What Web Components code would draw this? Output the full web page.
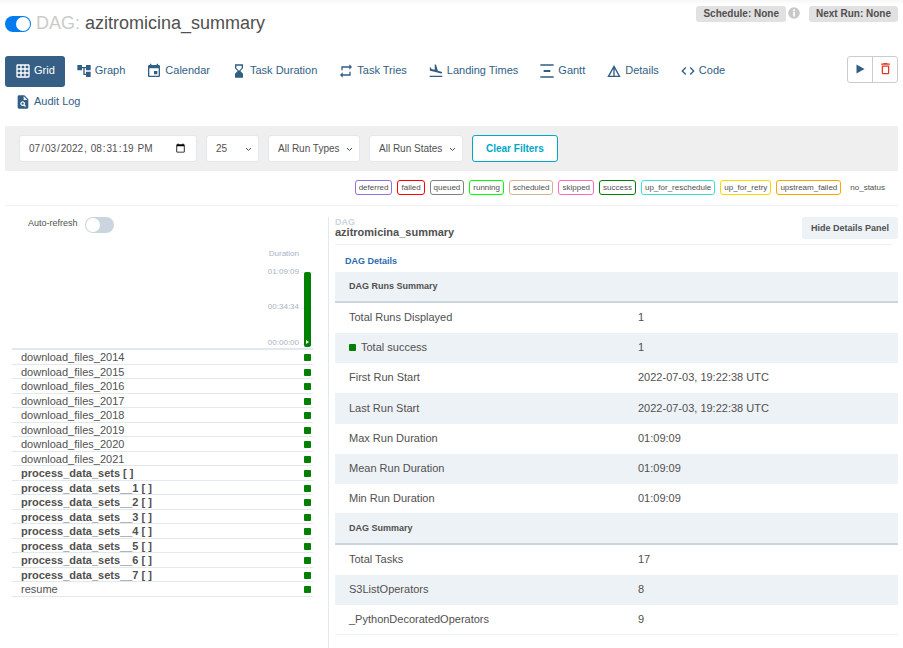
<!DOCTYPE html>
<html lang="en-US">
<head>
<meta charset="utf-8">
<title>azitromicina_summary - Grid - Airflow</title>
<style>
  body { margin: 0; background: #fff; color: #51504f; font: 11px/15px "Liberation Sans", Arial, sans-serif; }
</style>
</head>
<body>
<dag-page></dag-page>
<script>
const define = (name, html, setup) => {
  const template = document.createElement('template');
  template.innerHTML = html;
  customElements.define(name, class extends HTMLElement {
    connectedCallback() {
      if (this.shadowRoot) return;
      const root = this.attachShadow({ mode: 'open' });
      root.append(template.content.cloneNode(true));
      if (setup) setup(this, root);
    }
  });
};

const ICONS = {
  grid: 'M20 2H4c-1.1 0-2 .9-2 2v16c0 1.1.9 2 2 2h16c1.1 0 2-.9 2-2V4c0-1.1-.9-2-2-2zM8 20H4v-4h4v4zm0-6H4v-4h4v4zm0-6H4V4h4v4zm6 12h-4v-4h4v4zm0-6h-4v-4h4v4zm0-6h-4V4h4v4zm6 12h-4v-4h4v4zm0-6h-4v-4h4v4zm0-6h-4V4h4v4z',
  tree: 'M22 11V3h-7v3H9V3H2v8h7V8h2v10h4v3h7v-8h-7v3h-2V8h2v3z',
  event: 'M17 12h-5v5h5v-5zM16 1v2H8V1H6v2H5c-1.11 0-1.99.9-1.99 2L3 19c0 1.1.89 2 2 2h14c1.1 0 2-.9 2-2V5c0-1.1-.9-2-2-2h-1V1h-2zm3 18H5V8h14v11z',
  hourglass: 'M18 22l-.01-6L14 12l3.99-4.01L18 2H6v6l4 4-4 3.99V22h12zM8 7.5V4h8v3.5l-4 4-4-4z',
  repeat: 'M7 7h10v3l4-4-4-4v3H5v6h2V7zm10 10H7v-3l-4 4 4 4v-3h12v-6h-2v4z',
  landing: 'M2.5 19h19v2h-19v-2zm7.18-5.73l4.35 1.16 5.31 1.42c.8.21 1.62-.26 1.84-1.06.21-.8-.26-1.62-1.06-1.84l-5.31-1.42-2.76-9.02L10.12 2v8.28L5.15 8.95l-.93-2.32-1.45-.39v5.17l1.6.43 5.31 1.43z',
  gantt: 'M22 2v2H2V2h20zM7 10.5v3h10v-3H7zM2 20v2h20v-2H2z',
  details: 'M12 3L2 21h20L12 3zm1 5.92L18.6 19H13V8.92zm-2 0V19H5.4L11 8.92z',
  code: 'M9.4 16.6L4.8 12l4.6-4.6L8 6l-6 6 6 6 1.4-1.4zm5.2 0l4.6-4.6-4.6-4.6L16 6l6 6-6 6-1.4-1.4z',
  audit: 'M14 2H6c-1.1 0-2 .9-2 2v16c0 1.1.9 2 2 2h12c1.1 0 2-.9 2-2V8l-6-6zM13 3.500V9h5.500zM15.040 19.450l-1.880-1.880c-1.330.71-3.010.53-4.130-.59-1.370-1.370-1.370-3.580 0-4.950s3.580-1.370 4.950 0c1.120 1.120 1.310 2.800.59 4.130l1.880 1.880zM11.500 12.800a1.700 1.700 0 1 0 0 3.400 1.700 1.700 0 0 0 0-3.400z',
  play: 'M5 3v18l16-9z',
  trash: 'M6 19c0 1.100.9 2 2 2h8c1.100 0 2-.9 2-2V7H6v12zM8 9h8v10H8V9zm7.500-5l-1-1h-5l-1 1H5v2h14V4z',
  info: 'M12 2a10 10 0 1 0 0 20 10 10 0 0 0 0-20zm1.500 16h-3v-8h3zm0-9.500h-3v-3h3z'
};

define('ui-icon', `
  <style>
    :host { display: block; width: 16px; height: 16px; flex: none; }
    svg { display: block; width: 100%; height: 100%; fill: currentColor; fill-rule: evenodd; }
  </style>
  <svg viewBox="0 0 24 24" aria-hidden="true"><path/></svg>`,
  (el, root) => root.querySelector('path').setAttribute('d', ICONS[el.getAttribute('name')]));

define('ui-switch', `
  <style>
    :host { display: block; }
    label { display: flex; align-items: flex-start; gap: 7px; font-size: 9px; line-height: 12px; }
    input { appearance: none; box-sizing: border-box; flex: none; width: var(--switch-width, 29px); height: 16px; margin: 0; padding: 1px; border-radius: 8px; background: #cbd5e0; display: flex; cursor: pointer; }
    input::before { content: ""; width: 14px; height: 14px; border-radius: 7px; background: #fff; }
    input:checked { background: #017cee; justify-content: flex-end; }
  </style>
  <label><slot></slot><input type="checkbox" role="switch"></label>`,
  (el, root) => {
    const box = root.querySelector('input');
    box.checked = el.hasAttribute('checked');
    if (el.hasAttribute('name')) box.setAttribute('aria-label', el.getAttribute('name'));
  });

define('info-badge', `
  <style>
    :host { display: block; padding: 0 7px; border-radius: 3px; background: #e1e1e1; font-weight: bold; font-size: 10px; line-height: 16px; }
  </style><slot></slot>`);

define('nav-tab', `
  <style>
    :host { display: block; }
    a { display: flex; align-items: center; gap: 3px; box-sizing: border-box; height: 31px; padding: 0 10px 2px; border-radius: 3px; color: #315e85; text-decoration: none; white-space: nowrap; }
    a[aria-current] { background: #355f84; color: #fff; }
  </style>
  <a href="#"><slot name="icon"></slot><span><slot></slot></span></a>`,
  (el, root) => {
    const icon = document.createElement('template');
    icon.innerHTML = `<ui-icon name="${el.getAttribute('icon')}"></ui-icon>`;
    root.querySelector('slot[name]').replaceWith(icon.content);
    if (el.hasAttribute('active')) root.querySelector('a').setAttribute('aria-current', 'page');
  });

define('state-tag', `
  <style>
    :host { display: block; }
    button { display: block; margin: 0; padding: 0 3px; border: 1px solid var(--state, transparent); border-radius: 3px; background: #fff; color: inherit; font: inherit; font-size: 8px; line-height: 13px; }
  </style><button type="button"><slot></slot></button>`,
  (el, root) => el.hasAttribute('color') && root.querySelector('button').style.setProperty('--state', el.getAttribute('color')));

define('dag-header', `
  <style>
    :host { display: flex; justify-content: space-between; align-items: flex-start; height: 50px; padding: 6px 5px 0; box-sizing: border-box; background: linear-gradient(#f7f7f7, #fff 5px); }
    .title { display: flex; align-items: center; gap: 5px; padding-top: 7px; }
    h1 { margin: 0; padding-bottom: 2px; font-size: 18px; line-height: 20px; font-weight: normal; }
    h1 span { color: #cbcbcb; }
    .meta { display: flex; align-items: flex-start; }
    .meta ui-icon { width: 14px; height: 14px; margin: 0 8px 0 1px; color: #c8c8c8; }
  </style>
  <div class="title">
    <ui-switch checked name="Pause or unpause DAG" style="--switch-width: 26px"></ui-switch>
    <h1><span>DAG:</span> azitromicina_summary</h1>
  </div>
  <div class="meta"><info-badge>Schedule: None</info-badge><ui-icon name="info"></ui-icon><info-badge>Next Run: None</info-badge></div>`);

define('dag-nav', `
  <style>
    :host { display: flex; align-items: flex-start; justify-content: space-between; gap: 32px; padding: 6px 5px 8px; }
    nav { display: flex; flex-wrap: wrap; column-gap: 1px; }
    .actions { display: flex; flex: none; border: 1px solid #ccc; border-radius: 3px; }
    button { display: grid; place-items: center; box-sizing: border-box; width: 24px; height: 25px; margin: 0; padding: 0 0 2px; border: 0; background: none; color: #315e85; }
    button ui-icon { width: 12px; height: 12px; }
    button + button { width: 25px; border-left: 1px solid #ccc; color: #e43921; }
    button + button ui-icon { width: 15px; height: 15px; }
  </style>
  <nav>
    <nav-tab icon="grid" active>Grid</nav-tab><nav-tab icon="tree">Graph</nav-tab><nav-tab icon="event">Calendar</nav-tab><nav-tab icon="hourglass">Task Duration</nav-tab><nav-tab icon="repeat">Task Tries</nav-tab><nav-tab icon="landing">Landing Times</nav-tab><nav-tab icon="gantt">Gantt</nav-tab><nav-tab icon="details">Details</nav-tab><nav-tab icon="code">Code</nav-tab><nav-tab icon="audit">Audit Log</nav-tab>
  </nav>
  <div class="actions">
    <button type="button" aria-label="Trigger DAG"><ui-icon name="play"></ui-icon></button>
    <button type="button" aria-label="Delete DAG"><ui-icon name="trash"></ui-icon></button>
  </div>`);

define('filter-select', `
  <style>
    :host { display: grid; width: var(--w); }
    select, svg { grid-area: 1 / 1; }
    select { appearance: none; box-sizing: border-box; width: 100%; height: 27px; margin: 0; padding: 0 0 0 9px; border: 1px solid #e2e8f0; border-radius: 3px; background: #fff; color: inherit; font: inherit; font-size: 10px; }
    svg { justify-self: end; align-self: center; width: 7px; height: 5px; margin: 2px 7px 0 0; fill: none; stroke: #51504f; pointer-events: none; }
  </style>
  <select><option></option></select><svg viewBox="0 0 7 5"><path d="M1 1l2.500 2.500L6 1"/></svg>`,
  (el, root) => {
    root.querySelector('option').textContent = el.getAttribute('value');
    root.querySelector('select').setAttribute('aria-label', el.getAttribute('label'));
  });

define('filter-bar', `
  <style>
    :host { display: flex; flex-wrap: wrap; gap: 9px; margin: 0 5px; padding: 9px 14px; background: #efefef; }
    input { box-sizing: border-box; width: 178px; height: 27px; margin: 0; padding: 0 10px 0 8px; border: 1px solid #e2e8f0; border-radius: 3px; background: #fff; color: inherit; font: inherit; font-size: 10px; }
    input::-webkit-calendar-picker-indicator { width: 11px; height: 11px; padding: 0; }
    .clear { height: 27px; margin: 0; padding: 0 13px; border: 1px solid #00a7c7; border-radius: 3px; background: #fff; color: #00a7c7; font: inherit; font-size: 10px; font-weight: bold; }
  </style>
  <input type="datetime-local" step="1" value="2022-07-03T20:31:19" aria-label="Base date">
  <filter-select value="25" label="Number of runs" style="--w: 53px"></filter-select>
  <filter-select value="All Run Types" label="Run type" style="--w: 92px"></filter-select>
  <filter-select value="All Run States" label="Run state" style="--w: 94px"></filter-select>
  <button class="clear" type="button">Clear Filters</button>`);

define('state-legend', `
  <style>
    :host { display: flex; flex-wrap: wrap; justify-content: flex-end; gap: 5px; margin: 0 5px; padding: 9px 9px 10px; border-bottom: 1px solid #edf0f4; }
  </style>
  <state-tag color="mediumpurple">deferred</state-tag><state-tag color="red">failed</state-tag><state-tag color="gray">queued</state-tag><state-tag color="lime">running</state-tag><state-tag color="tan">scheduled</state-tag><state-tag color="hotpink">skipped</state-tag><state-tag color="green">success</state-tag><state-tag color="turquoise">up_for_reschedule</state-tag><state-tag color="gold">up_for_retry</state-tag><state-tag color="orange">upstream_failed</state-tag><state-tag>no_status</state-tag>`);

define('duration-chart', `
  <style>
    :host { display: flex; justify-content: flex-end; gap: 2px; height: 101px; border-bottom: 2px solid #e2e8f0; color: #a6b3c6; font-size: 8px; line-height: 10px; box-sizing: border-box; }
    .scale { display: flex; flex-direction: column; justify-content: space-between; text-align: right; }
    .scale b { font-weight: normal; margin-bottom: -18px; }
    .plot { display: flex; flex-direction: column; justify-content: space-between; align-items: stretch; width: 12px; height: 73px; margin-top: 23px; background: linear-gradient(#edf2f7, #edf2f7) 0 0 / 100% 1px no-repeat, linear-gradient(#edf2f7, #edf2f7) 0 50% / 100% 1px no-repeat, linear-gradient(#edf2f7, #edf2f7) 0 100% / 100% 1px no-repeat; }
    .bar { display: grid; align-items: end; justify-items: center; flex: none; box-sizing: border-box; width: 7px; height: 75px; margin-left: 3px; padding: 0 0 3px; border: 0; border-radius: 2px; background: green; }
    svg { display: block; width: 3px; height: 4px; fill: #fff; }
  </style>
  <div class="scale"><b>Duration</b><span>01:09:09</span><span>00:34:34</span><span>00:00:00</span></div>
  <div class="plot"><button class="bar" type="button" aria-label="Manual run, 01:09:09"><svg viewBox="0 0 3 4"><path d="M0 0l3 2-3 2z"/></svg></button></div>`);

define('task-grid', `
  <style>
    :host { display: block; box-sizing: border-box; padding: 11px 15px 0 7px; }
    ui-switch { width: 102px; margin: 0 0 16px 16px; }
    table { width: 100%; border-collapse: collapse; line-height: 13px; }
    tr { height: 14px; box-shadow: inset 0 -1px #e2e8f0; }
    tr:nth-child(odd) { height: 15px; }
    th, td { padding: 0; font-weight: normal; text-align: left; }
    th { padding-left: 9px; }
    .mapped th { font-weight: bold; }
    td { width: 9px; }
    i { display: block; width: 7px; height: 7px; border-radius: 1px; background: green; }
  </style>
  <ui-switch><span>Auto-refresh</span></ui-switch>
  <duration-chart></duration-chart>
  <table><tbody></tbody></table>`,
  (el, root) => {
    const files = [2014, 2015, 2016, 2017, 2018, 2019, 2020, 2021].map(y => [`download_files_${y}`]);
    const sets = ['', '__1', '__2', '__3', '__4', '__5', '__6', '__7'].map(n => [`process_data_sets${n} [ ]`, 'mapped']);
    root.querySelector('tbody').innerHTML = [...files, ...sets, ['resume']]
      .map(([name, kind = '']) => `<tr class="${kind}"><th scope="row">${name}</th><td><i role="img" aria-label="success"></i></td></tr>`).join('');
  });

define('details-table', `
  <style>
    :host { display: block; }
    table { width: 100%; border-collapse: separate; border-spacing: 0; table-layout: fixed; }
    th, td { box-sizing: border-box; height: 30px; padding: 0 14px 1px; font-weight: normal; text-align: left; }
    th:first-child { width: 289px; }
    thead > tr > * { height: 31px; border-bottom: 2px solid #cbd5e0; background: #edf2f7; font-size: 9px; }
    thead th { font-weight: bold; }
    tbody tr:nth-child(4) > * { height: 31px; }
    tbody tr:nth-child(even) > * { background: #edf2f7; }
    tbody tr:last-child > * { border-bottom: 1px solid #edf2f7; }
    i { display: inline-block; width: 7px; height: 7px; margin-right: 5px; border-radius: 1px; background: green; }
  </style>
  <slot></slot>`,
  (el, root) => {
    const groups = [
      ['DAG Runs Summary', [['Total Runs Displayed', '1'], ['<i></i>Total success', '1'], ['First Run Start', '2022-07-03, 19:22:38 UTC'], ['Last Run Start', '2022-07-03, 19:22:38 UTC'], ['Max Run Duration', '01:09:09'], ['Mean Run Duration', '01:09:09'], ['Min Run Duration', '01:09:09']]],
      ['DAG Summary', [['Total Tasks', '17'], ['S3ListOperators', '8'], ['_PythonDecoratedOperators', '9']]]
    ];
    const tables = document.createElement('template');
    tables.innerHTML = groups.map(([title, rows]) =>
      `<table><thead><tr><th scope="col">${title}</th><td></td></tr></thead><tbody>${rows.map(([k, v]) => `<tr><th scope="row">${k}</th><td>${v}</td></tr>`).join('')}</tbody></table>`).join('');
    root.append(tables.content);
  });

define('details-panel', `
  <style>
    :host { display: block; box-sizing: border-box; padding-left: 6px; border-left: 1px solid #e2e8f0; }
    header { display: flex; justify-content: space-between; align-items: flex-start; }
    h2 { margin: 0; font-size: 11px; line-height: 11px; }
    h2 small { display: block; font-size: 9px; line-height: 10px; color: #cbd5e0; }
    header button { height: 22px; margin: 0; padding: 0 9px; border: 0; border-radius: 3px; background: #edf2f7; color: inherit; font: bold 9px/22px "Liberation Sans", Arial, sans-serif; }
    hr { margin: 5px 6px 0 0; border: 0; border-top: 1px solid #edf0f4; }
    .crumb { display: block; padding: 9px 10px 3px; color: #2b6cb0; font-size: 9px; font-weight: bold; text-decoration: none; }
  </style>
  <header><h2><small>DAG</small>azitromicina_summary</h2><button type="button">Hide Details Panel</button></header>
  <hr>
  <a class="crumb" href="#">DAG Details</a>
  <details-table></details-table>`);

define('dag-page', `
  <style>
    :host { display: flex; flex-direction: column; min-height: 100vh; }
    main { display: grid; grid-template-columns: 323px minmax(0, 1fr); flex: 1; padding: 0 5px; }
    details-panel { margin-top: 11px; }
  </style>
  <dag-header></dag-header>
  <dag-nav></dag-nav>
  <filter-bar></filter-bar>
  <state-legend></state-legend>
  <main><task-grid></task-grid><details-panel></details-panel></main>`);
</script>
</body>
</html>
